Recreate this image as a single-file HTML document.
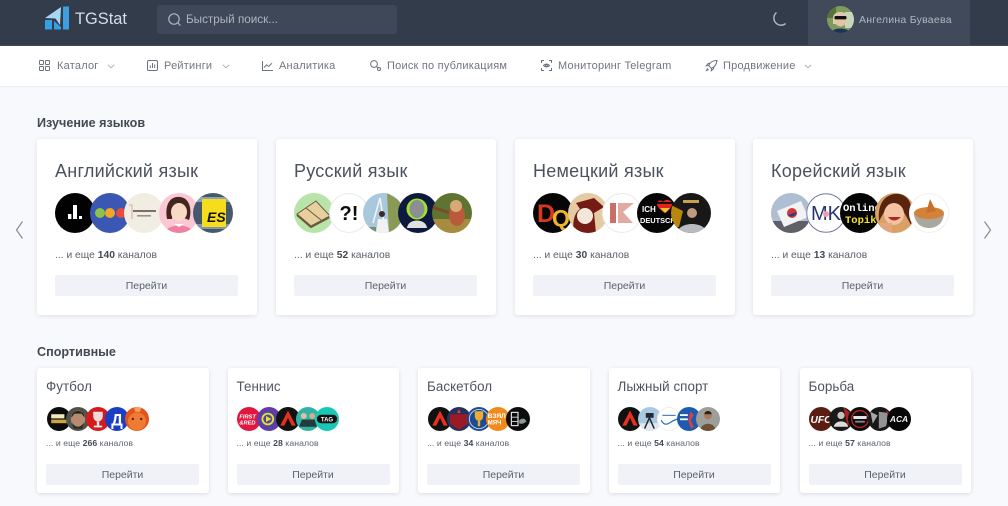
<!DOCTYPE html>
<html lang="ru"><head><meta charset="utf-8"><title>TGStat</title>
<style>
*{box-sizing:border-box}
html,body{margin:0;padding:0}
body{width:1008px;height:506px;overflow:hidden;position:relative;background:#f8f9fc;font-family:"Liberation Sans",sans-serif;color:#4b5563}
.abs,.card,.sm,.av,.t{position:absolute}
.t{white-space:nowrap}
#hd{left:0;top:0;width:1008px;height:46px;background:#333c4b;position:absolute;border-bottom:1px solid #4a4a55}
#nav{left:0;top:46px;width:1008px;height:41px;background:#fff;position:absolute;border-bottom:1px solid #eceef3}
.n{font-size:11px;color:#6f7680;top:59px;line-height:14px;letter-spacing:.22px}
.ni{position:absolute;top:59px;width:13px;height:13px;fill:none;stroke:#6b7280;stroke-width:1}
.ch{position:absolute;top:64px;width:8px;height:5px;fill:none;stroke:#a4aab4;stroke-width:.9}
.h{font-size:12.6px;font-weight:bold;color:#434a54;line-height:16px;left:37px}
.card{top:139px;width:219.5px;height:175.5px;background:#fff;border-radius:3px;box-shadow:0 1px 5px rgba(60,70,100,.14)}
.card .ti{position:absolute;left:18px;top:20px;font-size:18px;line-height:24px;color:#4b525d;white-space:nowrap;letter-spacing:.25px}
.card .c{position:absolute;left:18px;top:109.5px;font-size:10.3px;line-height:14px;color:#5a616b;white-space:nowrap}
.card .b{position:absolute;left:18px;top:136px;width:183px;height:21px;background:#f0f2f7;border-radius:2px;font-size:10.5px;line-height:22px;text-align:center;color:#5a616b}
.sm{top:367.5px;width:171.5px;height:125.5px;background:#fff;border-radius:3px;box-shadow:0 1px 4px rgba(60,70,100,.16)}
.sm .ti{position:absolute;left:9px;top:10.5px;font-size:13.4px;line-height:17px;color:#4f5660;white-space:nowrap;letter-spacing:.05px}
.sm .c{position:absolute;left:9px;top:69.5px;font-size:8.7px;line-height:12px;color:#5e656f;white-space:nowrap;letter-spacing:.05px}
.sm .b{position:absolute;left:9px;top:96px;width:153px;height:21px;background:#f0f2f7;border-radius:2px;font-size:10.5px;line-height:22px;text-align:center;color:#5a616b}
.av{border-radius:50%;overflow:hidden;display:block}
.l{width:40px;height:40px;top:54px}
.s{width:24px;height:24px;top:39.5px}
b{font-weight:bold;color:#434a54}
text{font-family:"Liberation Sans",sans-serif}
</style></head><body>

<div id="hd"></div>
<div id="nav"></div>

<svg class="abs" style="left:45px;top:6px" width="25" height="24" viewBox="0 0 25 24">
<rect x="18" y="0.5" width="6" height="23" fill="#3d9fe0"/>
<path d="M0 12L16 1 15 19 10.5 12.5Z" fill="#a9d6f2"/>
<path d="M0 14L7 14V23.5H0Z" fill="#35a0e4"/>
<path d="M9 15L16 21V23.5H9Z" fill="#3a9ee0"/>
</svg>
<div class="t" style="left:75px;top:8.5px;font-size:16.4px;line-height:20px;color:#d5dde6">TGStat</div>

<div class="abs" style="left:157px;top:5px;width:240px;height:29px;background:#3f4858;border-radius:3px"></div>
<svg class="abs" style="left:167px;top:12px" width="15" height="15" viewBox="0 0 15 15" fill="none" stroke="#aeb5c0" stroke-width="1.2"><circle cx="7" cy="7" r="5.2"/><path d="M11 11L13.4 13.6"/></svg>
<div class="t" style="left:186px;top:11.5px;font-size:11.7px;line-height:16px;color:#aeb5c0">Быстрый поиск...</div>

<svg class="abs" style="left:770px;top:11px" width="17" height="17" viewBox="0 0 17 17" fill="none" stroke="#b4bac4" stroke-width="1.4"><path d="M6.5 1.5A7 7 0 1 0 15.6 12.6 7 7 0 0 1 6.5 1.5Z"/></svg>

<div class="abs" style="left:808px;top:0;width:162px;height:45px;background:#414a5a"></div>
<svg class="av" style="left:827px;top:6px;width:27px;height:27px" viewBox="0 0 27 27">
<rect width="27" height="27" fill="#7f9a5c"/><rect x="18" y="6" width="9" height="16" fill="#c8d5bd"/><rect x="0" y="0" width="9" height="12" fill="#58743a"/>
<path d="M6 12C6 4 21 4 20 12V18H6Z" fill="#d8d2b4"/><ellipse cx="13.5" cy="14" rx="6" ry="6.5" fill="#e5c3a5"/>
<rect x="7.5" y="10" width="12" height="3.4" rx="1.2" fill="#111"/><path d="M4 27C5 21 22 21 23 27Z" fill="#1d3554"/></svg>
<div class="t" style="left:859px;top:12.5px;font-size:10.5px;line-height:15px;color:#b1b7c2;letter-spacing:.25px">Ангелина Буваева</div>

<!-- nav -->
<svg class="ni" style="left:38px" viewBox="0 0 13 13"><rect x="1.5" y="1.5" width="4" height="4" rx=".6"/><rect x="7.5" y="1.5" width="4" height="4" rx=".6"/><rect x="1.5" y="7.5" width="4" height="4" rx=".6"/><rect x="7.5" y="7.5" width="4" height="4" rx=".6"/></svg>
<div class="t n" style="left:57px">Каталог</div>
<svg class="ch" style="left:107px" viewBox="0 0 8 5"><path d="M.8 .8L4 3.8 7.2 .8"/></svg>
<svg class="ni" style="left:146px" viewBox="0 0 13 13"><rect x="1.5" y="1.5" width="10" height="10" rx="1.4"/><path d="M4.3 9V6.5M6.5 9V4M8.7 9V5.5"/></svg>
<div class="t n" style="left:164px">Рейтинги</div>
<svg class="ch" style="left:222px" viewBox="0 0 8 5"><path d="M.8 .8L4 3.8 7.2 .8"/></svg>
<svg class="ni" style="left:261px" viewBox="0 0 13 13"><path d="M1.5 2V11.5H12"/><path d="M3 8.5L5.6 5.8 7.6 7.5 11 4.2"/></svg>
<div class="t n" style="left:279px">Аналитика</div>
<svg class="ni" style="left:369px" viewBox="0 0 13 13"><circle cx="5" cy="5" r="3.4"/><path d="M7.6 7.6L9 9"/><circle cx="10" cy="10" r="1.5"/></svg>
<div class="t n" style="left:387px">Поиск по публикациям</div>
<svg class="ni" style="left:540px" viewBox="0 0 13 13"><path d="M1.5 4V1.5H4M9 1.5H11.5V4M11.5 9V11.5H9M4 11.5H1.5V9"/><path d="M3.5 6.5Q6.5 3.4 9.5 6.5 6.5 9.6 3.5 6.5Z"/><circle cx="6.5" cy="6.5" r=".9"/></svg>
<div class="t n" style="left:558px">Мониторинг Telegram</div>
<svg class="ni" style="left:705px" viewBox="0 0 13 13"><path d="M12 1.5C8 1.5 5 3.2 3.6 6.5L6.5 9.4C9.8 8 11.5 5 12 1.5Z"/><path d="M3.6 6.5L1.3 6.8 3 4.6 5 4.2M6.5 9.4L6.2 11.7 8.4 10 8.8 8M2.6 9.2L1.5 11.5 3.8 10.4"/></svg>
<div class="t n" style="left:723px">Продвижение</div>
<svg class="ch" style="left:804px" viewBox="0 0 8 5"><path d="M.8 .8L4 3.8 7.2 .8"/></svg>

<div class="t h" style="top:115px">Изучение языков</div>
<div class="t h" style="top:344px">Спортивные</div>

<svg class="abs" style="left:14px;top:220px" width="11" height="20" viewBox="0 0 11 20" fill="none" stroke="#858b95" stroke-width="1.2"><path d="M8.5 1.5L2.5 10 8.5 18.5"/></svg>
<svg class="abs" style="left:982px;top:220px" width="11" height="20" viewBox="0 0 11 20" fill="none" stroke="#858b95" stroke-width="1.2"><path d="M2.5 1.5L8.5 10 2.5 18.5"/></svg>

<!-- Английский -->
<div class="card" style="left:37px">
<div class="ti">Английский язык</div>
<svg class="av l" style="left:18px" viewBox="0 0 40 40"><rect width="40" height="40" fill="#020202"/><rect x="18" y="12" width="4" height="14" fill="#fff"/><rect x="13" y="21" width="3.4" height="5" fill="#fff"/><rect x="24" y="23" width="3" height="3" fill="#fff"/></svg>
<svg class="av l" style="left:52.5px" viewBox="0 0 40 40"><rect width="40" height="40" fill="#3b57b4"/><circle cx="10" cy="20" r="5" fill="#8bc34a"/><circle cx="20" cy="20" r="5" fill="#f5a623"/><circle cx="31" cy="20" r="5" fill="#e84c3d"/></svg>
<svg class="av l" style="left:87px" viewBox="0 0 40 40"><rect width="40" height="40" fill="#f1ede2"/><rect x="9" y="17" width="23" height="2" fill="#77706a"/><rect x="13" y="22" width="14" height="1.6" fill="#99928a"/><path d="M5 12H8V26" stroke="#d9a9a0" fill="none"/></svg>
<svg class="av l" style="left:121.5px" viewBox="0 0 40 40"><rect width="40" height="40" fill="#fbc7d5"/><path d="M8 26C5 8 14 3 21 4 32 5 33 20 30 27L25 25 26 14 14 14 13 26Z" fill="#43261e"/><ellipse cx="20" cy="19" rx="8" ry="9" fill="#f8d9c5"/><path d="M6 40C8 30 32 30 34 40Z" fill="#ef7fa3"/><path d="M15 31H25L20 34Z" fill="#fff"/></svg>
<svg class="av l" style="left:156px" viewBox="0 0 40 40"><rect width="40" height="40" fill="#45586c"/><rect y="4" width="40" height="5" fill="#8ba3b8"/><rect y="31" width="40" height="5" fill="#7f95a8"/><rect x="9" y="6" width="24" height="28" fill="#f7dc1b"/><text x="14" y="29" font-size="14" font-weight="bold" font-style="italic" fill="#111">ES</text></svg>
<div class="c">... и еще <b>140</b> каналов</div>
<div class="b">Перейти</div>
</div>

<!-- Русский -->
<div class="card" style="left:276px">
<div class="ti">Русский язык</div>
<svg class="av l" style="left:18px" viewBox="0 0 40 40"><rect width="40" height="40" fill="#b8e3a9"/><path d="M3 21L22 8 36 23 17 33Z" fill="#e8cf9e" stroke="#6c5a3e"/><path d="M12 15L27 27" stroke="#6c5a3e"/><path d="M3 22L17 34 36 24" fill="none" stroke="#6c5a3e" stroke-width="2"/></svg>
<svg class="av l" style="left:52.5px" viewBox="0 0 40 40"><rect width="40" height="40" fill="#fff"/><circle cx="20" cy="20" r="19.5" fill="none" stroke="#e8e8e8"/><text x="20" y="27" text-anchor="middle" font-size="20" font-weight="bold" fill="#0c0c0c">?!</text></svg>
<svg class="av l" style="left:87px" viewBox="0 0 40 40"><rect width="40" height="40" fill="#a9c7dd"/><path d="M24 0L40 10V40H26Z" fill="#8a9a55"/><path d="M10 30L17 5 21 30" fill="none" stroke="#eef3f6" stroke-width="1.6"/><circle cx="19" cy="21" r="3" fill="#3a2a22"/><path d="M13 40L15 26H24L26 40Z" fill="#f1f1f1"/><path d="M0 34H13V40H0Z" fill="#7c8a76"/></svg>
<svg class="av l" style="left:121.5px" viewBox="0 0 40 40"><rect width="40" height="40" fill="#0d1a3d"/><circle cx="19" cy="16" r="10.5" fill="#9fe02f"/><ellipse cx="19" cy="16" rx="7.5" ry="9" fill="#8c8f92"/><path d="M9 35C10 25 28 25 29 35Z" fill="#dfe1e3"/></svg>
<svg class="av l" style="left:156px" viewBox="0 0 40 40"><rect width="40" height="40" fill="#5e7430"/><rect x="0" y="26" width="40" height="14" fill="#a68c3c"/><path d="M0 14L18 20" stroke="#7d4a2a" stroke-width="3"/><ellipse cx="25" cy="22" rx="8" ry="11" fill="#b95a3c"/><circle cx="24" cy="13" r="6" fill="#d9a877"/></svg>
<div class="c">... и еще <b>52</b> каналов</div>
<div class="b">Перейти</div>
</div>

<!-- Немецкий -->
<div class="card" style="left:515px">
<div class="ti">Немецкий язык</div>
<svg class="av l" style="left:18px" viewBox="0 0 40 40"><rect width="40" height="40" fill="#060606"/><text x="4" y="29" font-size="25" font-weight="bold" fill="#d8381f">D</text><text x="19" y="33" font-size="23" font-weight="bold" fill="#f0b429">Q</text></svg>
<svg class="av l" style="left:52.5px" viewBox="0 0 40 40"><rect width="40" height="40" fill="#e4cba3"/><path d="M8 10L26 5 36 14 26 20 28 40H6C4 30 6 20 12 16Z" fill="#741b15"/><ellipse cx="17" cy="23" rx="8" ry="8" fill="#f3e7dc"/></svg>
<svg class="av l" style="left:87px" viewBox="0 0 40 40"><rect width="40" height="40" fill="#fff"/><circle cx="20" cy="20" r="19.5" fill="none" stroke="#e9e9e9"/><rect x="8" y="10" width="6" height="20" fill="#c86f6a"/><path d="M16 10H32L21 19 31 30H16Z" fill="#e2a9a0"/></svg>
<svg class="av l" style="left:121.5px" viewBox="0 0 40 40"><rect width="40" height="40" fill="#060606"/><text x="5" y="19" font-size="8" font-weight="bold" fill="#fff">ICH</text><text x="3" y="30" font-size="7.4" font-weight="bold" fill="#fff">DEUTSCH</text><path d="M26 9C29 5 36 7 35 12 34 16 30 19 28 20 25 18 21 15 20 12 20 7 24 6 26 9Z" fill="#e2231a"/><path d="M20 9H36V11H20Z" fill="#111"/><path d="M23 15H33L28 20Z" fill="#f6c026"/></svg>
<svg class="av l" style="left:156px" viewBox="0 0 40 40"><rect width="40" height="40" fill="#181818"/><path d="M0 12L12 18 8 34H0Z" fill="#b8860b"/><circle cx="21" cy="20" r="5" fill="#c29a7e"/><path d="M6 40C8 28 34 28 36 40Z" fill="#b8bcc0"/><rect x="12" y="7" width="16" height="3" fill="#c9a14a"/></svg>
<div class="c">... и еще <b>30</b> каналов</div>
<div class="b">Перейти</div>
</div>

<!-- Корейский -->
<div class="card" style="left:753px">
<div class="ti">Корейский язык</div>
<svg class="av l" style="left:18px" viewBox="0 0 40 40"><rect width="40" height="40" fill="#aebfd4"/><rect y="28" width="40" height="12" fill="#5f5f68"/><path d="M6 18L30 8 37 24 13 34Z" fill="#f3f3f3"/><circle cx="21" cy="20" r="5" fill="#d2383a"/><path d="M17 22A5 5 0 0 0 25.5 19Z" fill="#23408e"/></svg>
<svg class="av l" style="left:52.5px" viewBox="0 0 40 40"><rect width="40" height="40" fill="#fff"/><circle cx="20" cy="20" r="19.3" fill="none" stroke="#6f74a2"/><text x="20" y="27" text-anchor="middle" font-size="20" fill="#26356f">MK</text><circle cx="20" cy="21" r="3" fill="#eb9fb0"/></svg>
<svg class="av l" style="left:87px" viewBox="0 0 40 40"><rect width="40" height="40" fill="#050505"/><text x="3" y="18" font-size="10.5" font-weight="bold" fill="#fff" style="font-family:'Liberation Mono',monospace">Online</text><text x="5" y="30" font-size="10.5" font-weight="bold" fill="#f5e52a" style="font-family:'Liberation Mono',monospace">Topik</text></svg>
<svg class="av l" style="left:121.5px" viewBox="0 0 40 40"><rect width="40" height="40" fill="#d8a266"/><path d="M4 28C2 6 14 0 24 1 38 3 38 20 36 32L26 14 12 14Z" fill="#5a2310"/><ellipse cx="19" cy="21" rx="10" ry="11" fill="#f3c3a2"/><path d="M13 24Q19 31 26 24Z" fill="#a82929"/><rect x="5" y="30" width="12" height="10" fill="#e3a77e"/></svg>
<svg class="av l" style="left:156px" viewBox="0 0 40 40"><rect width="40" height="40" fill="#fff"/><circle cx="20" cy="20" r="19.5" fill="none" stroke="#eee"/><path d="M5 21H35C34 31 27 35 20 35 13 35 6 31 5 21Z" fill="#a9a79e"/><ellipse cx="20" cy="20" rx="15" ry="6" fill="#d58137"/><path d="M17 20L21 6 27 18Z" fill="#c9702d"/></svg>
<div class="c">... и еще <b>13</b> каналов</div>
<div class="b">Перейти</div>
</div>

<!-- Футбол -->
<div class="sm" style="left:37px">
<div class="ti">Футбол</div>
<svg class="av s" style="left:9.5px" viewBox="0 0 40 40"><rect width="40" height="40" fill="#0c0c0c"/><rect x="7" y="12" width="22" height="7" fill="#f0e6c0"/><rect x="7" y="21" width="26" height="6" fill="#c9a53a"/></svg>
<svg class="av s" style="left:29px" viewBox="0 0 40 40"><rect width="40" height="40" fill="#4f5349"/><ellipse cx="20" cy="20" rx="12" ry="14" fill="#b58b72"/><path d="M9 18C9 3 31 3 31 18L26 11H14Z" fill="#2a221c"/><path d="M10 26Q20 40 30 26L27 36H13Z" fill="#2f2a25"/></svg>
<svg class="av s" style="left:48.5px" viewBox="0 0 40 40"><rect width="40" height="40" fill="#d41a1c"/><path d="M12 8H28V16Q27 24 20 24 13 24 12 16Z" fill="#f2dada"/><rect x="18" y="24" width="4" height="7" fill="#eee"/><rect x="13" y="31" width="14" height="3" fill="#eee"/></svg>
<svg class="av s" style="left:68px" viewBox="0 0 40 40"><rect width="40" height="40" fill="#1a3fc2"/><text x="20" y="31" text-anchor="middle" font-size="27" font-weight="bold" fill="#fff">Д</text></svg>
<svg class="av s" style="left:87.5px" viewBox="0 0 40 40"><rect width="40" height="40" fill="#e2541c"/><ellipse cx="20" cy="24" rx="15" ry="15" fill="#ef7a32"/><circle cx="13" cy="20" r="2" fill="#53210c"/><circle cx="27" cy="20" r="2" fill="#53210c"/><path d="M15 0H28L25 8H17Z" fill="#f1a165"/></svg>
<div class="c">... и еще <b>266</b> каналов</div>
<div class="b">Перейти</div>
</div>

<!-- Теннис -->
<div class="sm" style="left:227.5px">
<div class="ti">Теннис</div>
<svg class="av s" style="left:9.5px" viewBox="0 0 40 40"><rect width="40" height="40" fill="#e0183f"/><text x="4" y="19" font-size="9.5" font-weight="bold" font-style="italic" fill="#fff">FIRST</text><text x="4" y="29" font-size="9.5" font-weight="bold" font-style="italic" fill="#fff">&amp;RED</text></svg>
<svg class="av s" style="left:29px" viewBox="0 0 40 40"><rect width="40" height="40" fill="#5d3ea8"/><circle cx="18" cy="20" r="9" fill="none" stroke="#d8e82f" stroke-width="3"/><path d="M15 15L24 20 15 25Z" fill="#d8e82f"/></svg>
<svg class="av s" style="left:48.5px" viewBox="0 0 40 40"><rect width="40" height="40" fill="#111"/><path d="M20 6L33 31H26L20 18 14 31H7Z" fill="#e8301f"/></svg>
<svg class="av s" style="left:68px" viewBox="0 0 40 40"><rect width="40" height="40" fill="#2fb3a4"/><circle cx="13" cy="15" r="5" fill="#e6bda0"/><circle cx="27" cy="15" r="5" fill="#d8a98c"/><path d="M5 33L10 21H31L35 33Z" fill="#233a3e"/></svg>
<svg class="av s" style="left:87.5px" viewBox="0 0 40 40"><rect width="40" height="40" fill="#19c7b5"/><rect x="3" y="13" width="34" height="14" rx="7" fill="#111"/><text x="20" y="24" text-anchor="middle" font-size="10" font-weight="bold" fill="#fff">TAG</text></svg>
<div class="c">... и еще <b>28</b> каналов</div>
<div class="b">Перейти</div>
</div>

<!-- Баскетбол -->
<div class="sm" style="left:418px">
<div class="ti">Баскетбол</div>
<svg class="av s" style="left:9.5px" viewBox="0 0 40 40"><rect width="40" height="40" fill="#111"/><path d="M20 6L33 31H26L20 18 14 31H7Z" fill="#e8301f"/></svg>
<svg class="av s" style="left:29px" viewBox="0 0 40 40"><rect width="40" height="40" fill="#24315f"/><path d="M5 12H35V28L20 38 5 28Z" fill="#9c1a24"/><path d="M20 3L23 10H17Z" fill="#e23a3a"/></svg>
<svg class="av s" style="left:48.5px" viewBox="0 0 40 40"><rect width="40" height="40" fill="#1e4a92"/><circle cx="20" cy="20" r="16" fill="none" stroke="#c9d6ea" stroke-width="1.5"/><path d="M13 7H27V16Q26 23 20 23 14 23 13 16ZM18 23H22V32H18Z" fill="#e8ad33"/></svg>
<svg class="av s" style="left:68px" viewBox="0 0 40 40"><rect width="40" height="40" fill="#f18a1c"/><text x="3" y="18" font-size="11" font-weight="bold" fill="#fff">ВЗЯЛ</text><text x="3" y="29" font-size="10" font-weight="bold" fill="#fff">МЯЧ</text></svg>
<svg class="av s" style="left:87.5px" viewBox="0 0 40 40"><rect width="40" height="40" fill="#0d0d0d"/><rect x="9" y="9" width="11" height="22" fill="none" stroke="#ddd" stroke-width="2"/><path d="M9 17H20M9 24H20" stroke="#ddd" stroke-width="1.5"/><path d="M22 22Q30 16 34 24 28 30 22 27Z" fill="#8a9a94"/></svg>
<div class="c">... и еще <b>34</b> каналов</div>
<div class="b">Перейти</div>
</div>

<!-- Лыжный -->
<div class="sm" style="left:608.5px">
<div class="ti">Лыжный спорт</div>
<svg class="av s" style="left:9.5px" viewBox="0 0 40 40"><rect width="40" height="40" fill="#111"/><path d="M20 6L33 31H26L20 18 14 31H7Z" fill="#e8301f"/></svg>
<svg class="av s" style="left:29px" viewBox="0 0 40 40"><rect width="40" height="40" fill="#a9c9e2"/><rect y="27" width="40" height="13" fill="#dfe8ef"/><rect x="13" y="10" width="13" height="8" fill="#232a33"/><path d="M19 18L11 36M19 18L27 36" stroke="#222" stroke-width="2.4"/></svg>
<svg class="av s" style="left:48.5px" viewBox="0 0 40 40"><rect width="40" height="40" fill="#fff"/><circle cx="20" cy="20" r="19.3" fill="none" stroke="#e5e5e5"/><path d="M7 22Q12 32 20 27T34 20" fill="none" stroke="#2673ba" stroke-width="2"/><rect x="9" y="13" width="22" height="2" fill="#4b83bb"/></svg>
<svg class="av s" style="left:68px" viewBox="0 0 40 40"><rect width="40" height="40" fill="#1d5bae"/><path d="M22 8L28 13 23 22 28 34 23 35 19 24Z" fill="#df3f43"/><rect x="5" y="12" width="13" height="3" fill="#fff"/><rect x="5" y="19" width="13" height="3" fill="#fff"/></svg>
<svg class="av s" style="left:87.5px" viewBox="0 0 40 40"><rect width="40" height="40" fill="#9e9e9b"/><circle cx="20" cy="14" r="6.5" fill="#a67c5d"/><path d="M7 40C8 24 32 24 33 40Z" fill="#6f5135"/><path d="M14 12C14 5 26 5 26 12Z" fill="#2d2219"/></svg>
<div class="c">... и еще <b>54</b> каналов</div>
<div class="b">Перейти</div>
</div>

<!-- Борьба -->
<div class="sm" style="left:799.5px">
<div class="ti">Борьба</div>
<svg class="av s" style="left:9.5px" viewBox="0 0 40 40"><rect width="40" height="40" fill="#5b1d11"/><text x="20" y="27" text-anchor="middle" font-size="17" font-weight="bold" font-style="italic" fill="#fff">UFC</text></svg>
<svg class="av s" style="left:29px" viewBox="0 0 40 40"><rect width="40" height="40" fill="#1a1a1a"/><path d="M24 0L40 14V34L30 28Z" fill="#b11e22"/><circle cx="20" cy="14" r="6" fill="#c8c3bd"/><path d="M8 33C10 21 30 21 32 33Z" fill="#dcdcdc"/></svg>
<svg class="av s" style="left:48.5px" viewBox="0 0 40 40"><rect width="40" height="40" fill="#0e0e0e"/><circle cx="20" cy="20" r="14" fill="none" stroke="#c52326" stroke-width="2"/><rect x="9" y="15" width="22" height="5" fill="#e5e5e5"/><rect x="12" y="23" width="16" height="3" fill="#888"/></svg>
<svg class="av s" style="left:68px" viewBox="0 0 40 40"><rect width="40" height="40" fill="#171717"/><path d="M4 8L16 14 8 28Z" fill="#a7a7a7"/><path d="M18 8L35 10 30 32 18 36Z" fill="#c9c9c9" opacity=".7"/><path d="M30 4L40 16 36 26Z" fill="#b11e22"/></svg>
<svg class="av s" style="left:87.5px" viewBox="0 0 40 40"><rect width="40" height="40" fill="#060606"/><text x="20" y="25" text-anchor="middle" font-size="14" font-weight="bold" font-style="italic" fill="#f2f2f2">ACA</text></svg>
<div class="c">... и еще <b>57</b> каналов</div>
<div class="b">Перейти</div>
</div>

</body></html>
